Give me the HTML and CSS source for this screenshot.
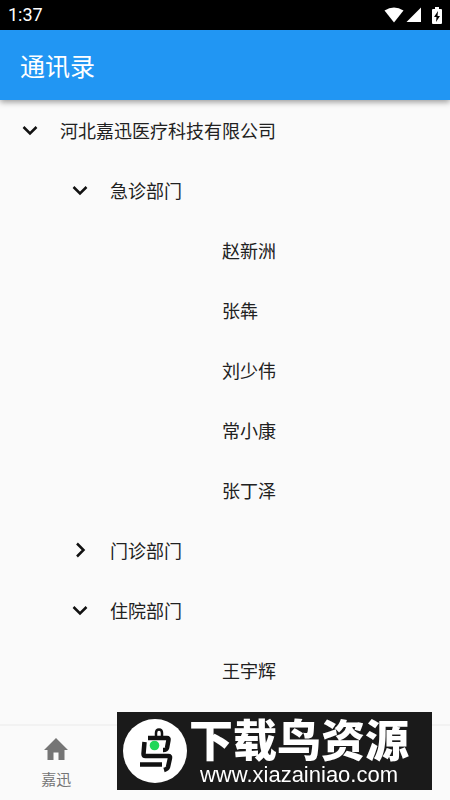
FILE: index.html
```html
<!DOCTYPE html>
<html lang="zh-CN">
<head>
<meta charset="utf-8">
<meta name="viewport" content="width=device-width, initial-scale=1">
<title>通讯录</title>
<link rel="stylesheet" href="styles.css">
</head>
<body>
<div class="status">
  <span class="clock">1:37</span>
  <div class="status-icons">
    <svg width="20" height="16" viewBox="0 0 20 16" aria-hidden="true"><path d="M0.5 3.6Q10 -2.8 19.500 3.600L10 15.500z" fill="#fff"/></svg>
    <svg width="16" height="16" viewBox="0 0 16 16" aria-hidden="true"><path d="M15 0.500V15H0.500z" fill="#fff"/></svg>
    <svg class="battery" width="10" height="17" viewBox="0 0 10 17" aria-hidden="true"><path d="M3 0h4v2h2q1 0 1 1v13q0 1-1 1H1q-1 0-1-1V3q0-1 1-1h2z" fill="#fff"/><path d="M6 4L2 10h2.500L4 15l4-6H5.500z" fill="#000"/></svg>
  </div>
</div>
<header class="app-bar"><h1>通讯录</h1></header>
<main class="content">
  <ul class="tree">
    <li>
      <button class="row" type="button" aria-expanded="true"><svg class="chevron" viewBox="0 0 20 20" aria-hidden="true"><path d="M3.500 7l6.500 6.500L16.500 7"/></svg>河北嘉迅医疗科技有限公司</button>
      <ul class="departments">
        <li>
          <button class="row" type="button" aria-expanded="true"><svg class="chevron" viewBox="0 0 20 20" aria-hidden="true"><path d="M3.500 7l6.500 6.500L16.500 7"/></svg>急诊部门</button>
          <ul class="people">
            <li class="person">赵新洲</li>
            <li class="person">张犇</li>
            <li class="person">刘少伟</li>
            <li class="person">常小康</li>
            <li class="person">张丁泽</li>
          </ul>
        </li>
        <li>
          <button class="row" type="button" aria-expanded="false"><svg class="chevron" viewBox="0 0 20 20" aria-hidden="true"><path d="M7 3.500l6.500 6.500L7 16.500"/></svg>门诊部门</button>
        </li>
        <li>
          <button class="row" type="button" aria-expanded="true"><svg class="chevron" viewBox="0 0 20 20" aria-hidden="true"><path d="M3.500 7l6.500 6.500L16.500 7"/></svg>住院部门</button>
          <ul class="people">
            <li class="person">王宇辉</li>
          </ul>
        </li>
      </ul>
    </li>
  </ul>
</main>
<nav class="tabs">
  <a class="tab" href="#home">
    <svg width="24" height="22" viewBox="0 0 24 22" aria-hidden="true"><path d="M12 0L24 12h-3.500v10h-6v-7.500h-5V22h-6V12H0z" fill="#757575"/></svg>
    <span>嘉迅</span>
  </a>
</nav>
<aside class="watermark">
  <svg class="logo" viewBox="0 0 64 64" aria-hidden="true">
    <circle cx="32" cy="32" r="32" fill="#fff"/>
    <g fill="none" stroke="#111" stroke-width="4.500" stroke-linejoin="round">
      <path d="M33 17v-3q0-3.500 3-3.500t3 3.500v3" stroke-width="2.500"/>
      <path d="M25 19h19q2 0 1.500 2l-1.500 8q-.5 2-4 2"/>
      <path d="M21.500 23l-1 12q0 2 2 2h23q2 0 1.500 2l-2 9q-.5 2-4 3"/>
      <path d="M17 45.500h22"/>
    </g>
    <circle cx="31.500" cy="26.500" r="4.800" fill="#20d759"/>
  </svg>
  <div class="brand">
    <strong>下载鸟资源</strong>
    <span>www.xiazainiao.com</span>
  </div>
</aside>
</body>
</html>
```
FILE: styles.css
```css
* { box-sizing: border-box; }
body {
  margin: 0;
  min-height: 100vh;
  display: flex;
  flex-direction: column;
  background: #fafafa;
  color: #212121;
  font-family: Roboto, "Noto Sans CJK SC", sans-serif;
}
ul { list-style: none; margin: 0; padding: 0; }
.status {
  height: 30px;
  padding: 0 8px;
  display: flex;
  align-items: center;
  justify-content: space-between;
  background: #000;
  color: #fff;
}
.clock { font-size: 18px; line-height: 30px; }
.status-icons { display: flex; align-items: center; gap: 2px; }
.battery { margin-left: 8px; }
.app-bar {
  height: 70px;
  padding: 0 20px;
  display: flex;
  align-items: center;
  background: #2196f3;
  color: #fff;
  box-shadow: 0 2px 6px rgba(0, 0, 0, 0.4);
}
h1 { margin: 0; font-size: 25px; font-weight: 400; line-height: normal; }
.content { flex: 1; }
.row,
.person {
  height: 60px;
  display: flex;
  align-items: center;
  font-size: 18px;
  line-height: normal;
}
.row {
  width: 100%;
  padding: 0 20px;
  gap: 20px;
  border: 0;
  background: none;
  color: inherit;
  font-family: inherit;
  text-align: left;
}
.chevron {
  width: 20px;
  height: 20px;
  fill: none;
  stroke: #111;
  stroke-width: 2.5;
}
.departments { padding-left: 50px; }
.people { padding-left: 172px; }
.tabs {
  height: 76px;
  display: grid;
  grid-template-columns: repeat(4, 1fr);
  border-top: 2px solid #f2f2f2;
}
.tab {
  display: flex;
  flex-direction: column;
  align-items: center;
  gap: 9px;
  padding-top: 12px;
  color: #757575;
  font-size: 15px;
  line-height: 22px;
  text-decoration: none;
}
.watermark {
  position: fixed;
  right: 18px;
  bottom: 10px;
  width: 315px;
  height: 78px;
  padding-left: 6px;
  display: flex;
  align-items: center;
  gap: 2px;
  background: #1a1a1a;
  color: #fff;
}
.logo { width: 64px; height: 64px; flex: none; }
.brand {
  display: flex;
  flex-direction: column;
  align-items: center;
  gap: 4px;
  white-space: nowrap;
}
.brand strong {
  font-family: "Noto Sans CJK SC", sans-serif;
  font-size: 44px;
  font-weight: 900;
  line-height: 44px;
}
.brand span {
  font-family: "Liberation Sans", sans-serif;
  font-size: 22px;
  line-height: 22px;
}
```
